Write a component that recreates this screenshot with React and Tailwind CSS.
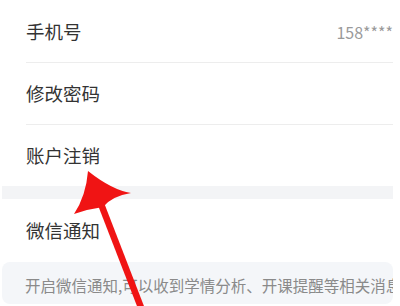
export default function App() {
  const font = { fontFamily: '"Noto Sans CJK SC", "Noto Sans", sans-serif' }
  return (
    <div className="w-[400px] h-[306px] overflow-hidden bg-white relative" style={font}>
      <div className="pl-[2px] pr-[7px]">
        {/* Phone */}
        <div className="h-[62px] flex items-center justify-between pl-[24px] pt-[2px]">
          <span className="text-[18.5px] text-[#333]">手机号</span>
          <span className="text-[16px] text-[#9a9a9a]">158****</span>
        </div>
        <div className="ml-[24px] h-px bg-[#ededed]" />

        <div className="h-[61px] flex items-center pl-[24px]">
          <span className="text-[18.5px] text-[#333]">修改密码</span>
        </div>
        <div className="ml-[24px] h-px bg-[#ededed]" />

        <div className="h-[61px] flex items-center pl-[24px]">
          <span className="text-[18.5px] text-[#333]">账户注销</span>
        </div>

        {/* Section gap */}
        <div className="h-[13px] bg-[#f3f4f6]" />

        <div className="h-[63px] flex items-center pl-[24px]">
          <span className="text-[18.5px] text-[#333]">微信通知</span>
        </div>

        <div className="h-[42px] bg-[#f4f6f9] rounded-[8px] overflow-hidden flex items-center pl-[23px] pt-[6px]">
          <span className="text-[15.5px] text-[#8a8a8a] whitespace-nowrap">开启微信通知,可以收到学情分析、开课提醒等相关消息推送</span>
        </div>
      </div>

      {/* Red arrow annotation */}
      <svg className="absolute left-0 top-0" width="400" height="306" viewBox="0 0 400 306">
        <path d="M101 204 L142 310" stroke="#f01414" strokeWidth="6.5" strokeLinecap="butt" fill="none" />
        <path
          d="M88 171 Q112 190 131 193 Q112 196 103 207 Q88 209 74 214 Q86 196 88 171 Z"
          fill="#f01414"
        />
      </svg>
    </div>
  )
}
